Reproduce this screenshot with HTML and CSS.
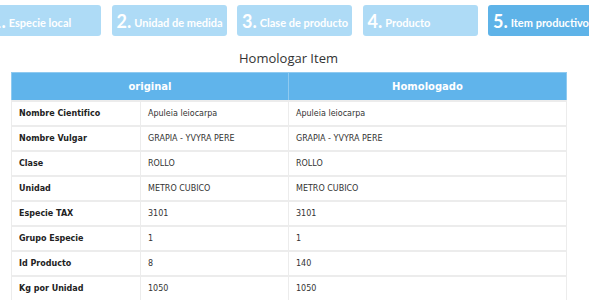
FILE: index.html
```html
<!DOCTYPE html>
<html lang="es">
<head>
  <meta charset="UTF-8" />
  <meta name="viewport" content="width=device-width, initial-scale=1.0" />
  <title>Homologar Item</title>
  <link rel="stylesheet" href="styles.css">
</head>
<body>
  <div class="steps">
    <div class="step"><span class="num">1.</span> <span class="lbl">Especie local</span></div>
    <div class="step"><span class="num">2.</span> <span class="lbl">Unidad de medida</span></div>
    <div class="step"><span class="num">3.</span> <span class="lbl">Clase de producto</span></div>
    <div class="step"><span class="num">4.</span> <span class="lbl">Producto</span></div>
    <div class="step active"><span class="num">5.</span> <span class="lbl">Item productivo</span></div>
  </div>

  <div class="panel">
    <h2 class="title">Homologar Item</h2>
    <table class="homolog">
      <colgroup>
        <col class="c-label">
        <col class="c-orig">
        <col class="c-homo">
      </colgroup>
      <thead>
        <tr><th colspan="2">original</th><th>Homologado</th></tr>
      </thead>
      <tbody>
        <tr><td class="lab">Nombre Cientifico</td><td>Apuleia leiocarpa</td><td>Apuleia leiocarpa</td></tr>
        <tr><td class="lab">Nombre Vulgar</td><td>GRAPIA - YVYRA PERE</td><td>GRAPIA - YVYRA PERE</td></tr>
        <tr><td class="lab">Clase</td><td>ROLLO</td><td>ROLLO</td></tr>
        <tr><td class="lab">Unidad</td><td>METRO CUBICO</td><td>METRO CUBICO</td></tr>
        <tr><td class="lab">Especie TAX</td><td>3101</td><td>3101</td></tr>
        <tr><td class="lab">Grupo Especie</td><td>1</td><td>1</td></tr>
        <tr><td class="lab">Id Producto</td><td>8</td><td>140</td></tr>
        <tr><td class="lab">Kg por Unidad</td><td>1050</td><td>1050</td></tr>
      </tbody>
    </table>
  </div>
</body>
</html>
```

FILE: styles.css
```css
body { margin: 0; background: #fff; font-family: "DejaVu Sans", Verdana, sans-serif; color: #333; overflow: hidden; }

.steps { display: flex; justify-content: center; gap: 10.5px; padding-top: 5px; }
.step { flex: 0 0 115px; height: 31px; box-sizing: border-box; padding: 0 0 0 5px; background: #aedbf6; border-radius: 3px; color: #fff; font-family: Lato, sans-serif; font-weight: bold; white-space: nowrap; display: flex; align-items: center; gap: 3px; }
.step.active { background: #5eb3e8; }
.step .num { font-size: 18px; }
.step .lbl { font-size: 11px; padding-top: 4px; }

.panel { width: 555px; margin-left: 11px; }
.title { margin: 13px 0 5px; text-align: center; font-family: "Open Sans", sans-serif; font-weight: normal; font-size: 13px; color: #333; }

.homolog { width: 100%; border-collapse: collapse; table-layout: fixed; font-size: 8px; }
.c-label { width: 129px; }
.c-orig { width: 148px; }
.c-homo { width: 278px; }
.homolog th { background: #60b4eb; color: #fff; font-size: 10px; height: 27px; padding: 0; border: 1px solid #8fcaf0; }
.homolog td { height: 23px; padding: 0 7px; border: 1px solid #ececec; border-width: 2px 1px 0; color: #333; }
.homolog td.lab { font-weight: bold; color: #222; }
```
